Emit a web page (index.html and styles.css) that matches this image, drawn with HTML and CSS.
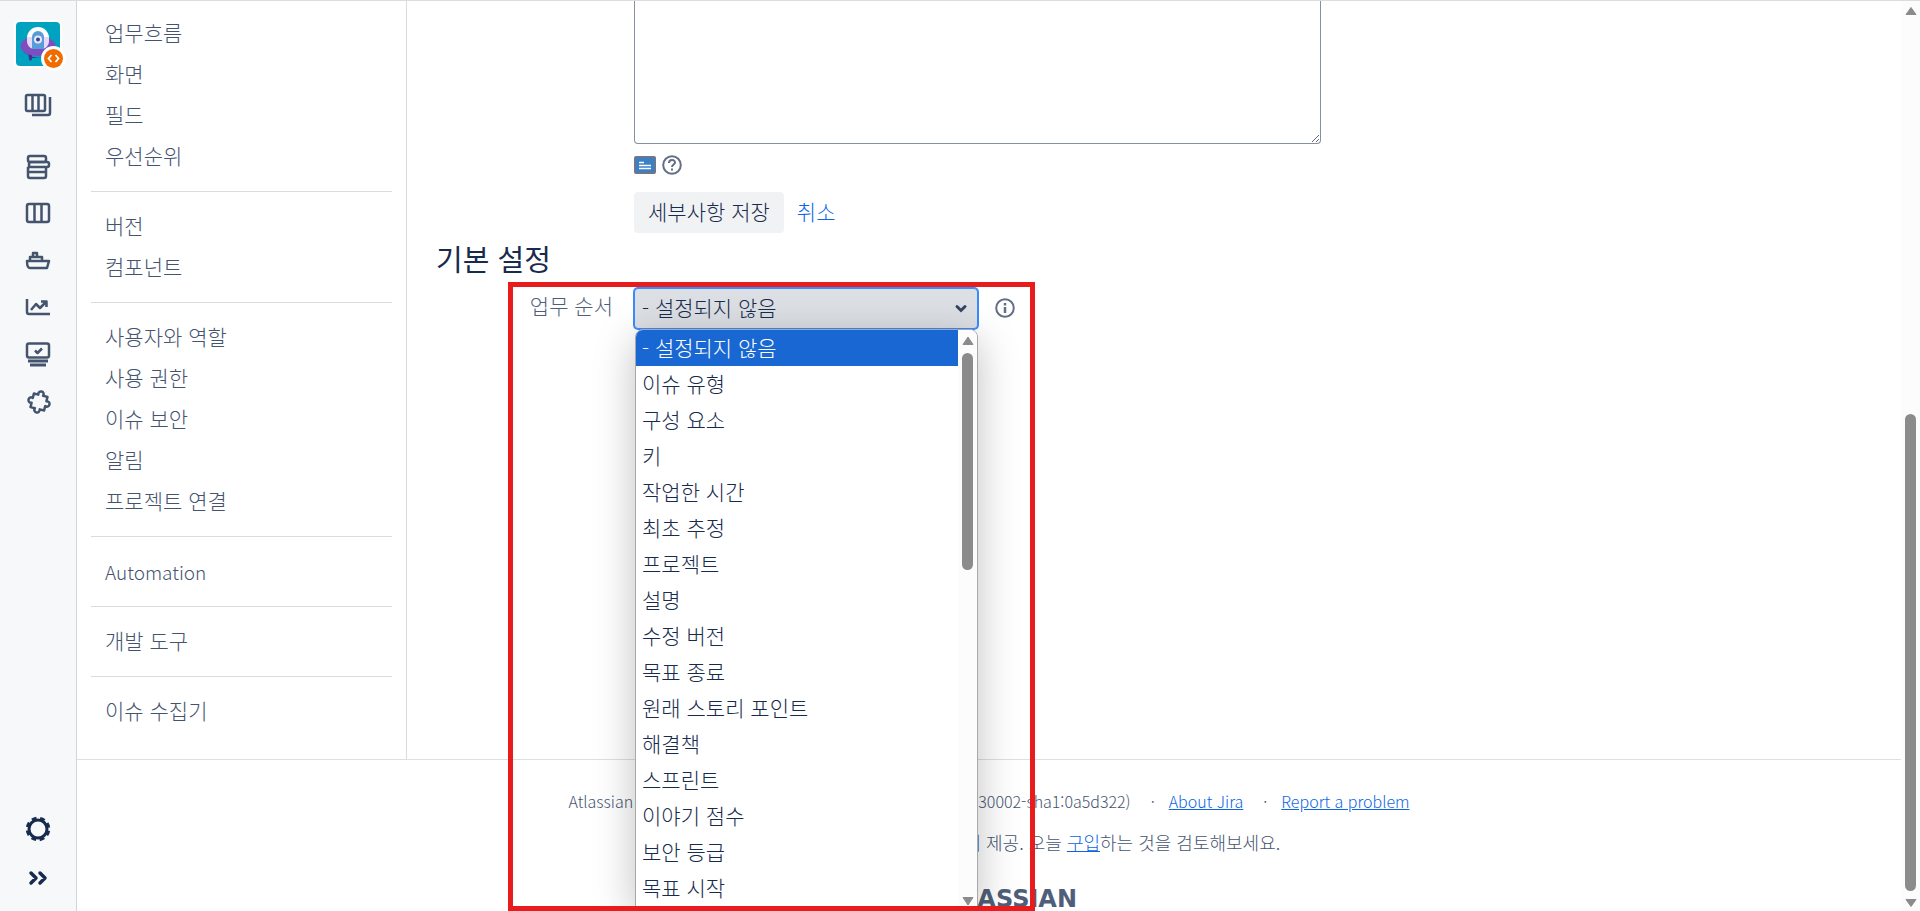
FILE: index.html
```html
<!DOCTYPE html>
<html lang="ko">
<head>
<meta charset="utf-8">
<title>프로젝트 설정 - Jira</title>
<link rel="stylesheet" href="styles.css">
</head>
<body>
<div class="page">
  <nav class="rail" aria-label="프로젝트">
    <a href="#" class="project-logo" title="프로젝트">
      <svg width="52" height="52" viewBox="0 0 52 52">
        <rect x="0" y="0" width="48" height="48" rx="6" fill="#fff"/>
        <rect x="2" y="2" width="44" height="44" rx="4" fill="#00a3bf"/>
        <path d="M14 32h4v7a1 1 0 0 1-3 0z" fill="#403294"/>
        <path d="M9 31c5 8 28 10 32 0l-6 7H18z" fill="#403294"/>
        <ellipse cx="24" cy="26" rx="17.500" ry="10" fill="#7e4dc2"/>
        <ellipse cx="24" cy="18" rx="11" ry="11" fill="#fff"/>
        <path d="M13 17h22v4c0 4-3 8-7 8h-8c-4 0-7-4-7-8z" fill="#e6d9f7"/>
        <path d="M18 29V17a6 6 0 0 1 12 0v12z" fill="#579dd9"/>
        <circle cx="24" cy="19.500" r="4" fill="#eae6ff"/>
        <circle cx="24" cy="19.500" r="2" fill="#344a86"/>
        <circle cx="39.500" cy="38.500" r="12.500" fill="#fff"/>
        <circle cx="39.500" cy="38.500" r="9.500" fill="#ef6c00"/>
        <path d="M37.500 35l-3 3.500 3 3.500M41.500 35l3 3.500-3 3.500" fill="none" stroke="#fff" stroke-width="1.800"/>
      </svg>
    </a>
    <a href="#" class="rail-link rail-boards" title="보드">
      <svg class="icon" width="28" height="26" viewBox="0 0 28 26">
        <rect x="2" y="3" width="19" height="16" rx="1.500"/>
        <path d="M8.500 3v16M14.500 3v16M26 5v16a2 2 0 0 1-2 2H8"/>
      </svg>
    </a>
    <a href="#" class="rail-link" title="백로그">
      <svg class="icon" width="26" height="26" viewBox="0 0 26 26">
        <rect x="3" y="2" width="18" height="6" rx="2"/>
        <rect x="4" y="8" width="20" height="5" rx="2"/>
        <path d="M3 13v3M3 18h18M21 13v9a2 2 0 0 1-2 2H5a2 2 0 0 1-2-2v-7a2 2 0 0 1 2-2"/>
      </svg>
    </a>
    <a href="#" class="rail-link" title="보드">
      <svg class="icon" width="26" height="26" viewBox="0 0 26 26">
        <rect x="2" y="3" width="22" height="18" rx="2"/>
        <path d="M9.500 3v18M16.500 3v18"/>
      </svg>
    </a>
    <a href="#" class="rail-link" title="릴리스">
      <svg class="icon" width="26" height="26" viewBox="0 0 26 26">
        <path d="M2 13h22l-2 7H5c-2 0-3-3-3-7zM5 13V9h12v4M8 9V5h4v4"/>
      </svg>
    </a>
    <a href="#" class="rail-link" title="보고서">
      <svg class="icon" width="26" height="26" viewBox="0 0 26 26">
        <path d="M2 4v13a2 2 0 0 0 2 2h21M6 15l5-6 4 4 6-6M16 6.500h5.500V12"/>
      </svg>
    </a>
    <a href="#" class="rail-link" title="이슈">
      <svg class="icon" width="26" height="26" viewBox="0 0 26 26">
        <rect x="2" y="1.500" width="22" height="14" rx="2"/>
        <path d="M10 8.500l2.500 2.500L17 6.500"/>
        <path d="M3 19h20M5 23h16" stroke-width="3"/>
      </svg>
    </a>
    <a href="#" class="rail-link" title="앱">
      <svg class="icon" width="28" height="28" viewBox="0 0 28 28">
        <path d="M7 7h4.500c-1.500-5 6.500-5 5 0H21v4.500c5-1.500 5 6.500 0 5V21h-4.500c1.500 5-6.500 5-5 0H7v-4.500c-5 1.500-5-6.500 0-5z" transform="translate(1 0) rotate(14 14 14)"/>
      </svg>
    </a>
    <a href="#" class="rail-link rail-settings" title="프로젝트 설정">
      <svg width="26" height="26" viewBox="0 0 26 26" fill="none" stroke="#172b4d">
        <circle cx="13" cy="13" r="9" stroke-width="3"/>
        <circle cx="13" cy="13" r="10.800" stroke-width="3" stroke-dasharray="4.800 3.682" stroke-dashoffset="6.640"/>
      </svg>
    </a>
    <button type="button" class="rail-link" title="펼치기">
      <svg width="20" height="16" viewBox="0 0 20 16" fill="none" stroke="#172b4d" stroke-width="3.500" stroke-linecap="round" stroke-linejoin="round">
        <path d="M3 3l5 5-5 5M12 3l5 5-5 5"/>
      </svg>
    </button>
  </nav>

  <div class="content">
    <div class="columns">
      <nav class="project-nav" aria-label="프로젝트 설정">
        <ul>
          <li><a href="#">업무흐름</a></li>
          <li><a href="#">화면</a></li>
          <li><a href="#">필드</a></li>
          <li><a href="#">우선순위</a></li>
        </ul>
        <ul>
          <li><a href="#">버전</a></li>
          <li><a href="#">컴포넌트</a></li>
        </ul>
        <ul>
          <li><a href="#">사용자와 역할</a></li>
          <li><a href="#">사용 권한</a></li>
          <li><a href="#">이슈 보안</a></li>
          <li><a href="#">알림</a></li>
          <li><a href="#">프로젝트 연결</a></li>
        </ul>
        <ul>
          <li><a href="#" class="latin">Automation</a></li>
        </ul>
        <ul>
          <li><a href="#">개발 도구</a></li>
        </ul>
        <ul>
          <li><a href="#">이슈 수집기</a></li>
        </ul>
      </nav>

      <main class="settings">
        <form action="#">
          <div class="details">
            <textarea class="description" aria-label="설명"></textarea>
            <div class="editor-tools">
              <button type="button" class="icon-button" title="미리보기">
                <svg width="22" height="18" viewBox="0 0 22 18">
                  <rect x="1" y="1" width="20" height="16" rx="1" fill="#3b7fc4" stroke="#6b778c" stroke-width="2"/>
                  <path d="M5 6.500h5M5 9.500h12M5 12.500h12" stroke="#fff" stroke-width="1.500"/>
                </svg>
              </button>
              <button type="button" class="icon-button" title="도움말">
                <svg width="20" height="20" viewBox="0 0 20 20" fill="none" stroke="#626f86" stroke-width="2">
                  <circle cx="10" cy="10" r="8.800"/>
                  <path d="M7 8c0-4 6-4 6-.5 0 2-3 2-3 4.500M10 13.500v2"/>
                </svg>
              </button>
            </div>
            <div class="actions">
              <button type="submit" class="save">세부사항 저장</button>
              <a href="#">취소</a>
            </div>
          </div>

          <h2>기본 설정</h2>
          <div class="field-group">
            <label for="order">업무 순서</label>
            <div class="picker">
              <select id="order">
                <option>- 설정되지 않음</option>
              </select>
              <svg class="chevron" width="14" height="10" viewBox="0 0 14 10"><path d="M3 2.500l4 4 4-4"/></svg>
              <div class="menu">
                <ul role="listbox" aria-label="업무 순서">
                  <li role="option" aria-selected="true" class="selected">- 설정되지 않음</li>
                  <li role="option">이슈 유형</li>
                  <li role="option">구성 요소</li>
                  <li role="option">키</li>
                  <li role="option">작업한 시간</li>
                  <li role="option">최초 추정</li>
                  <li role="option">프로젝트</li>
                  <li role="option">설명</li>
                  <li role="option">수정 버전</li>
                  <li role="option">목표 종료</li>
                  <li role="option">원래 스토리 포인트</li>
                  <li role="option">해결책</li>
                  <li role="option">스프린트</li>
                  <li role="option">이야기 점수</li>
                  <li role="option">보안 등급</li>
                  <li role="option">목표 시작</li>
                </ul>
                <div class="menu-scroll">
                  <svg width="14" height="10" viewBox="0 0 14 10"><path d="M7 1l5 7.500H2z"/></svg>
                  <div class="menu-thumb"></div>
                  <svg width="14" height="10" viewBox="0 0 14 10"><path d="M7 9l5-7.500H2z"/></svg>
                </div>
              </div>
            </div>
            <svg class="info" width="20" height="20" viewBox="0 0 20 20" fill="none" stroke="#626f86" stroke-width="2">
              <circle cx="10" cy="10" r="8.800"/>
              <path d="M10 9v6M10 5v2.500" stroke-width="2.500"/>
            </svg>
            <div class="callout"></div>
          </div>
        </form>
      </main>
    </div>

    <footer class="footer">
      <ul class="footer-links">
        <li>Atlassian Jira Project Management Software (v1001.0.0-030002-sha1:0a5d322)</li>
        <li><a href="#">About Jira</a></li>
        <li><a href="#">Report a problem</a></li>
      </ul>
      <p>Atlassian Jira의 평가판 라이선스에서 제공. 오늘 <a href="#">구입</a>하는 것을 검토해보세요.</p>
      <div class="brand">
        <svg width="20" height="20" viewBox="0 0 20 20"><path d="M6 9l5 10H1zM10 1l9 18h-6C9 13 8 7 10 1z"/></svg>
        ATLASSIAN
      </div>
    </footer>
  </div>

  <div class="page-scroll">
    <svg width="14" height="12" viewBox="0 0 14 12"><path d="M7 2.500l5 7H2z"/></svg>
    <div class="page-track"><div class="page-thumb"></div></div>
    <svg width="14" height="12" viewBox="0 0 14 12"><path d="M7 9.500l5-7H2z"/></svg>
  </div>
</div>
</body>
</html>
```
FILE: styles.css
```css
* {
  box-sizing: border-box;
}

body {
  margin: 0;
  background-color: #fff;
  color: #172b4d;
  font-family: "Noto Sans CJK KR", sans-serif;
  font-size: 21px;
  font-weight: 300;
}

ul {
  list-style: none;
  margin: 0;
  padding: 0;
}

a {
  color: #0c66e4;
}

button {
  border: none;
  background: none;
  padding: 0;
  font: inherit;
  color: inherit;
  cursor: pointer;
}

.page {
  display: flex;
  height: 100vh;
  overflow: hidden;
  border-top: 1px solid #dcdcdc;
}

/* left icon rail */
.rail {
  display: flex;
  flex-direction: column;
  align-items: center;
  flex: none;
  width: 77px;
  padding: 19px 0 10px;
  background-color: #f7f8f9;
  border-right: 1px solid #d0d4db;
}

.project-logo {
  height: 52px;
  margin-left: 4px;
}

.project-logo svg {
  display: block;
}

.rail-link {
  display: flex;
  align-items: center;
  justify-content: center;
  width: 48px;
  height: 47px;
}

.rail-boards {
  margin: 9px 0 15px;
}

.rail-settings {
  margin-top: auto;
  margin-bottom: 2px;
}

.icon {
  fill: none;
  stroke: #44546f;
  stroke-width: 2.5;
  stroke-linejoin: round;
}

.content {
  flex: 1;
  min-width: 0;
}

.columns {
  display: flex;
}

.project-nav {
  flex: none;
  width: 330px;
  padding: 0 14px 27px;
  border-right: 1px solid #d8dbe2;
}

.project-nav ul {
  padding: 14px 0;
  border-bottom: 1px solid #d8dbe2;
}

.project-nav ul:first-child {
  padding-top: 12px;
}

.project-nav ul:last-child {
  padding-bottom: 0;
  border-bottom: none;
}

.project-nav a {
  display: block;
  padding: 0 14px 2px;
  line-height: 39px;
  color: #44546f;
  text-decoration: none;
}

.project-nav .latin {
  padding-bottom: 0;
  font-size: 19px;
  line-height: 41px;
}

/* details form */
.settings {
  flex: 1;
  padding-left: 29px;
}

.details {
  padding-left: 198px;
}

.description {
  display: block;
  width: 687px;
  height: 143px;
  border: 1px solid #8590a2;
  border-top: none;
  border-radius: 0 0 4px 4px;
  resize: both;
}

.editor-tools {
  display: flex;
  align-items: center;
  gap: 6px;
  height: 20px;
  margin: 11px 0 17px;
}

.icon-button svg {
  display: block;
}

.actions {
  display: flex;
  align-items: center;
  gap: 13px;
}

.actions a {
  padding-bottom: 3px;
  text-decoration: none;
}

.save {
  height: 41px;
  padding: 0 14px 3px;
  border-radius: 4px;
  background-color: #f1f2f4;
}

h2 {
  margin: 0;
  padding-bottom: 5px;
  font-size: 29px;
  font-weight: 400;
  line-height: 50px;
}

.field-group {
  position: relative;
  display: flex;
  align-items: center;
  height: 41px;
}

.field-group label {
  align-self: flex-start;
  width: 177px;
  margin-right: 21px;
  line-height: 34px;
  text-align: right;
  color: #505f79;
}

.picker {
  position: relative;
}

.picker select {
  display: block;
  width: 344px;
  height: 41px;
  padding: 0 7px 3px;
  border: 1px solid #388bff;
  border-radius: 4px;
  box-shadow: 0 0 0 1px #388bff;
  background-color: #dcdfe4;
  appearance: none;
  font: inherit;
  color: #172b4d;
}

.chevron {
  position: absolute;
  right: 10px;
  top: 16px;
  fill: none;
  stroke: #344563;
  stroke-width: 3;
  stroke-linecap: round;
}

.menu {
  position: absolute;
  z-index: 1;
  top: 41px;
  left: 1px;
  display: flex;
  width: 343px;
  border: 1px solid #a8a8a8;
  border-radius: 8px 8px 0 0;
  background-color: #fff;
  box-shadow: 0 10px 40px rgba(0, 0, 0, 0.25);
  overflow: hidden;
}

.menu ul {
  flex: 1;
}

.menu li {
  padding: 0 6px 2px;
  line-height: 34px;
}

.menu .selected {
  background-color: #1967d2;
  color: #fff;
}

.menu-scroll {
  display: flex;
  flex-direction: column;
  align-items: center;
  width: 19px;
  padding-top: 6px;
  background-color: #fcfcfc;
  fill: #8b8b8b;
  stroke: #8b8b8b;
  stroke-linejoin: round;
}

.menu-thumb {
  width: 11px;
  height: 217px;
  margin: 7px 0 auto;
  border-radius: 6px;
  background-color: #8b8b8b;
}

.info {
  margin: 0 0 2px 17px;
}

/* red frame round the open list */
.callout {
  position: absolute;
  z-index: 2;
  top: -6px;
  left: 72px;
  width: 527px;
  height: 629px;
  border: 5px solid #e81c1c;
  pointer-events: none;
}

.footer {
  padding-top: 25px;
  border-top: 1px solid #dcdfe4;
  color: #44546f;
  font-size: 18px;
  line-height: 32px;
  text-align: center;
}

.footer-links {
  display: flex;
  justify-content: center;
  font-size: 16px;
}

.footer-links li + li::before {
  content: "·";
  padding: 0 14px 0 20px;
}

.footer p {
  margin: 9px 0 29px;
}

.brand {
  display: flex;
  align-items: center;
  justify-content: center;
  gap: 8px;
  font-family: "DejaVu Sans", sans-serif;
  font-size: 24px;
  font-weight: 700;
  line-height: 24px;
  color: #505f79;
  fill: #505f79;
}

.page-scroll {
  display: flex;
  flex-direction: column;
  align-items: center;
  flex: none;
  width: 19px;
  padding: 4px 0 2px;
  background-color: #fcfcfc;
  fill: #8b8b8b;
  stroke: #8b8b8b;
  stroke-linejoin: round;
}

.page-track {
  display: flex;
  flex: 1;
  align-items: flex-end;
  padding: 6px 0;
}

.page-thumb {
  width: 11px;
  height: 55%;
  border-radius: 6px;
  background-color: #8b8b8b;
}
```
